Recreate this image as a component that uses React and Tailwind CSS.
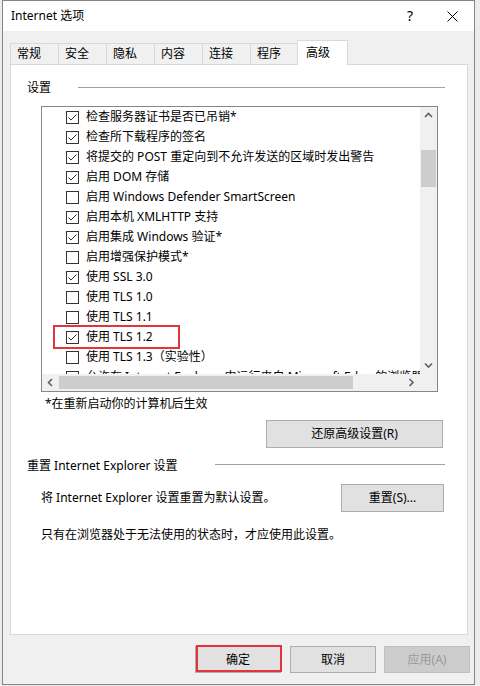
import React from "react";

const items = [
  ["检查服务器证书是否已吊销*", true],
  ["检查所下载程序的签名", true],
  ["将提交的 POST 重定向到不允许发送的区域时发出警告", true],
  ["启用 DOM 存储", true],
  ["启用 Windows Defender SmartScreen", false],
  ["启用本机 XMLHTTP 支持", true],
  ["启用集成 Windows 验证*", true],
  ["启用增强保护模式*", false],
  ["使用 SSL 3.0", true],
  ["使用 TLS 1.0", false],
  ["使用 TLS 1.1", false],
  ["使用 TLS 1.2", true],
  ["使用 TLS 1.3（实验性）", false],
  ["允许在 Internet Explorer 中运行来自 Microsoft Edge 的浏览器扩展程序", false],
];

function Check({ on }) {
  return (
    <svg width="13" height="13" viewBox="0 0 13 13" className="shrink-0">
      <rect x="0.5" y="0.5" width="12" height="12" fill="#fff" stroke="#333" strokeWidth="1" />
      {on && <path d="M2.5 6.5 L5 9 L10.5 3.5" fill="none" stroke="#333" strokeWidth="1" />}
    </svg>
  );
}

function Chevron({ dir }) {
  const d = {
    up: "M1 5 L4.5 1.5 L8 5",
    down: "M1 1.5 L4.5 5 L8 1.5",
    left: "M5 1 L1.5 4.5 L5 8",
    right: "M1.5 1 L5 4.5 L1.5 8",
  }[dir];
  const w = dir === "up" || dir === "down" ? 9 : 7;
  const h = dir === "up" || dir === "down" ? 7 : 9;
  return (
    <svg width={w} height={h} viewBox={`0 0 ${w} ${h}`}>
      <path d={d} fill="none" stroke="#606060" strokeWidth="1.6" />
    </svg>
  );
}

function Btn({ children, className = "" }) {
  return (
    <div
      className={
        "flex items-center justify-center bg-[#e1e1e1] border border-[#adadad] text-[12px] leading-[16px] text-black " +
        className
      }
    >
      {children}
    </div>
  );
}

const tabs = [
  ["常规", "w-[48px]"],
  ["安全", "w-[48px]"],
  ["隐私", "w-[48px]"],
  ["内容", "w-[48px]"],
  ["连接", "w-[48px]"],
  ["程序", "w-[47px]"],
];

export default function App() {
  return (
    <div className="w-[480px] h-[686px] bg-[#ececec] overflow-hidden font-['Noto_Sans','Noto_Sans_CJK_SC',sans-serif] text-[12px] leading-[16px] text-black">
      <div className="ml-[2px] w-[473px] h-[685px] border border-[#858585] bg-[#f0f0f0] flex flex-col">
        {/* title bar */}
        <div className="h-[30px] bg-white flex items-center pl-[8px] shrink-0">
          <span className="text-[12px]">Internet 选项</span>
          <span className="ml-auto text-[14px] leading-[16px] mr-[34px]">?</span>
          <svg width="11" height="11" viewBox="0 0 11 11" className="mr-[16px]">
            <path d="M0.5 0.5 L10.5 10.5 M10.5 0.5 L0.5 10.5" stroke="#000" strokeWidth="1" />
          </svg>
        </div>

        {/* body */}
        <div className="flex flex-col pl-[7px] pt-[9px]">
          {/* tabs */}
          <div className="flex items-end h-[24px] relative z-10">
            {tabs.map(([t, w]) => (
              <div
                key={t}
                className={
                  w +
                  " h-[21px] bg-[#f0f0f0] border-t border-l border-[#d9d9d9] pl-[6px] flex items-center"
                }
              >
                {t}
              </div>
            ))}
            <div className="w-[51px] h-[25px] -mb-px bg-white border border-b-0 border-[#d9d9d9] pl-[8px] flex items-center">
              高级
            </div>
          </div>

          {/* panel */}
          <div className="w-[458px] h-[571px] bg-white border border-[#d9d9d9] flex flex-col">
            {/* 设置 header */}
            <div className="mt-[15px] h-[16px] flex items-center pl-[16px] pr-[22px]">
              <span>设置</span>
              <div className="ml-[27px] flex-1 h-px bg-[#a0a0a0] -mt-[2px]" />
            </div>

            {/* listbox */}
            <div className="mt-[10px] ml-[30px] w-[397px] h-[286px] border border-[#828790] flex flex-col">
              <div className="flex h-[267px]">
                <div className="w-[378px] h-[267px] overflow-hidden">
                  {items.map(([label, on], i) => (
                    <div key={i} className="relative h-[20px] flex items-center pl-[24px] gap-[7px] whitespace-nowrap">
                      <Check on={on} />
                      <span>{label}</span>
                      {label === "使用 TLS 1.2" && (
                        <div className="absolute left-[11px] top-[-2px] w-[127px] h-[24px] border-2 border-[#e2343c]" />
                      )}
                    </div>
                  ))}
                </div>
                <div className="w-[17px] h-[267px] bg-[#f0f0f0] flex flex-col items-center">
                  <div className="h-[17px] w-full flex items-center justify-center">
                    <Chevron dir="up" />
                  </div>
                  <div className="mt-[26px] w-[15px] h-[37px] bg-[#cdcdcd]" />
                  <div className="mt-auto h-[17px] w-full flex items-center justify-center">
                    <Chevron dir="down" />
                  </div>
                </div>
              </div>
              <div className="flex h-[17px]">
                <div className="w-[378px] h-[17px] bg-[#f0f0f0] flex items-center">
                  <div className="w-[17px] h-[17px] flex items-center justify-center">
                    <Chevron dir="left" />
                  </div>
                  <div className="w-[294px] h-[13px] bg-[#cdcdcd]" />
                  <div className="ml-auto w-[17px] h-[17px] flex items-center justify-center">
                    <Chevron dir="right" />
                  </div>
                </div>
                <div className="w-[17px] h-[17px] bg-[#f0f0f0]" />
              </div>
            </div>

            <div className="mt-[4px] ml-[34px] h-[16px] flex items-center">*在重新启动你的计算机后生效</div>

            <Btn className="mt-[8px] ml-[255px] w-[177px] h-[28px]">还原高级设置(R)</Btn>

            {/* 重置 header */}
            <div className="mt-[10px] h-[16px] flex items-center pl-[16px] pr-[22px]">
              <span>重置 Internet Explorer 设置</span>
              <div className="ml-auto w-[230px] h-px bg-[#a0a0a0] -mt-[4px]" />
            </div>

            <div className="mt-[10px] h-[28px] flex items-center pl-[30px]">
              <span>将 Internet Explorer 设置重置为默认设置。</span>
              <Btn className="ml-auto mr-[23px] w-[103px] h-[28px]">重置(S)...</Btn>
            </div>

            <div className="mt-[15px] ml-[30px] h-[16px] flex items-center">
              只有在浏览器处于无法使用的状态时，才应使用此设置。
            </div>
          </div>

          {/* bottom buttons */}
          <div className="mt-[11px] flex ml-[185px]">
            <div className="relative w-[86px] h-[27px]">
              <Btn className="w-[86px] h-[27px] border-[#0078d7]">确定</Btn>
              <div className="absolute left-[1px] top-[-1px] w-[86px] h-[27px] border-2 border-[#e2343c]" />
            </div>
            <Btn className="ml-[9px] w-[86px] h-[27px]">取消</Btn>
            <div className="ml-[8px] w-[86px] h-[27px] flex items-center justify-center bg-[#cccccc] border border-[#bfbfbf] text-[#9a9a9a]">
              应用(A)
            </div>
          </div>
        </div>
      </div>
    </div>
  );
}
